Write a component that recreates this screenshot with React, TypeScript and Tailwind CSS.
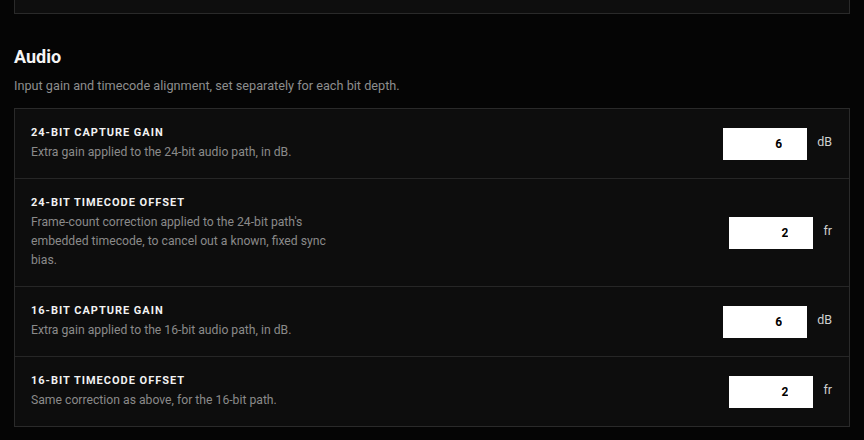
import React from 'react';

interface Setting {
  title: string;
  description: string;
  value: string;
  unit: string;
}

const settings: Setting[] = [
  {
    title: '24-bit capture gain',
    description: 'Extra gain applied to the 24-bit audio path, in dB.',
    value: '6',
    unit: 'dB',
  },
  {
    title: '24-bit timecode offset',
    description:
      "Frame-count correction applied to the 24-bit path's embedded timecode, to cancel out a known, fixed sync bias.",
    value: '2',
    unit: 'fr',
  },
  {
    title: '16-bit capture gain',
    description: 'Extra gain applied to the 16-bit audio path, in dB.',
    value: '6',
    unit: 'dB',
  },
  {
    title: '16-bit timecode offset',
    description: 'Same correction as above, for the 16-bit path.',
    value: '2',
    unit: 'fr',
  },
];

const SettingRow = ({ setting }: { setting: Setting }) => (
  <div className="flex items-center justify-between border-t border-[#262626] py-4 pl-4 pr-[17px] first:border-t-0">
    <div className="max-w-[296px]">
      <div className="text-[11px] font-bold uppercase leading-4 tracking-[0.09em] text-[#f2f2f2]">
        {setting.title}
      </div>
      <p className="mt-[2px] text-[12.2px] leading-[19px] text-[#8a8a8a]">{setting.description}</p>
    </div>
    <div className="flex items-center gap-[10px]">
      <input
        type="text"
        readOnly
        value={setting.value}
        className="h-8 w-[84px] bg-white pr-[25px] text-right text-[12px] font-bold text-black outline-none"
      />
      <span className="-mt-[3px] text-[12.5px] text-[#d0d0d0]">{setting.unit}</span>
    </div>
  </div>
);

export default function App() {
  return (
    <div
      className="h-[440px] w-full overflow-hidden bg-[#050505] px-[14px]"
      style={{ fontFamily: 'Roboto, "Noto Sans", sans-serif' }}
    >
      {/* Previous section's panel, scrolled out of view */}
      <div className="-mt-[20px] h-[34px] border border-[#2a2a2a] bg-[#0e0e0e]" />

      <section className="mt-[29px] w-[836px]">
        <h2 className="text-[18px] font-bold leading-7 text-[#f5f5f5]">Audio</h2>
        <p className="mt-[7px] text-[12.7px] leading-4 text-[#8e8e8e]">
          Input gain and timecode alignment, set separately for each bit depth.
        </p>

        <div className="mt-[14px] border border-[#2a2a2a] bg-[#0d0d0d]">
          {settings.map((s) => (
            <SettingRow key={s.title} setting={s} />
          ))}
        </div>
      </section>
    </div>
  );
}
